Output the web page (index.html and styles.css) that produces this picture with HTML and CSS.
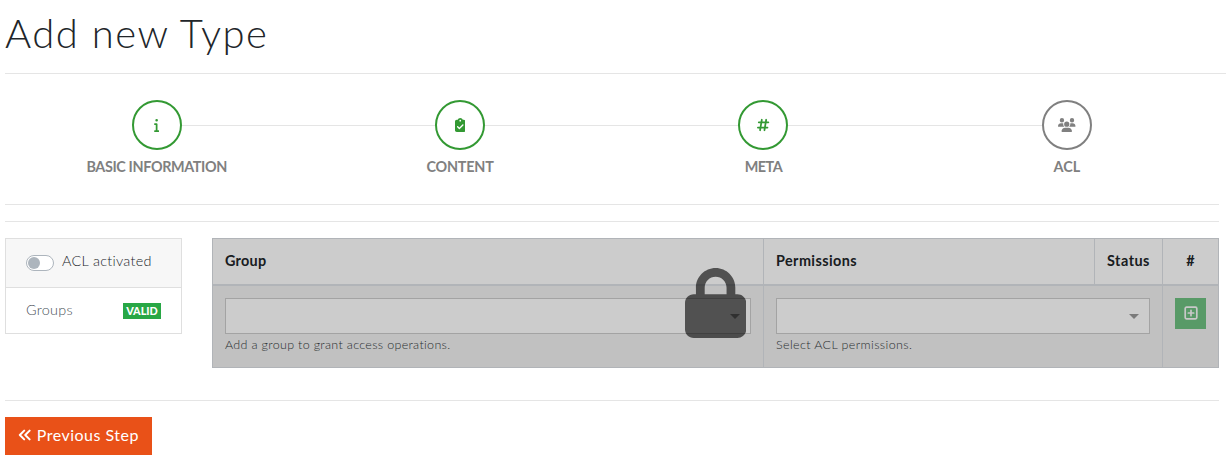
FILE: index.html
```html
<!DOCTYPE html>
<html lang="en">
<head>
<meta charset="utf-8">
<title>Add new Type</title>
<link rel="stylesheet" href="styles.css">
</head>
<body>
<h1 class="title"><span>Add new Type</span></h1>
<main class="content">
  <ol class="steps">
    <li class="step done">
      <span class="circle"><svg width="5.25" height="14" viewBox="0 0 192 512"><path d="M48 80a48 48 0 1 1 96 0A48 48 0 1 1 48 80zM0 224c0-17.7 14.3-32 32-32H96c17.7 0 32 14.3 32 32V448h32c17.7 0 32 14.3 32 32s-14.3 32-32 32H32c-17.7 0-32-14.3-32-32s14.3-32 32-32H64V256H32c-17.7 0-32-14.3-32-32z"/></svg></span>
      <span class="label l-basic">BASIC INFORMATION</span>
    </li>
    <li class="step done">
      <span class="circle"><svg width="10.5" height="14" viewBox="0 0 384 512"><path fill-rule="evenodd" d="M192 0c-41.800 0-77.400 26.700-90.500 64H64C28.700 64 0 92.700 0 128v320c0 35.300 28.700 64 64 64h256c35.300 0 64-28.700 64-64V128c0-35.300-28.700-64-64-64h-37.500C269.400 26.700 233.800 0 192 0zm0 64a32 32 0 1 1 0 64 32 32 0 1 1 0-64zM305 273L177 401c-9.400 9.400-24.600 9.400-33.900 0L79 337c-9.400-9.400-9.400-24.600 0-33.900s24.600-9.400 33.900 0l47 47L271 239c9.400-9.400 24.600-9.400 33.900 0s9.400 24.600 0 33.900z"/></svg></span>
      <span class="label l-content">CONTENT</span>
    </li>
    <li class="step done">
      <span class="circle"><svg width="12.25" height="14" viewBox="0 0 448 512"><path d="M181.300 32.400c17.400 2.900 29.200 19.400 26.300 36.800L197.800 128h95.100l11.500-69.300c2.900-17.400 19.400-29.200 36.800-26.300s29.200 19.400 26.300 36.800L357.800 128H416c17.700 0 32 14.300 32 32s-14.300 32-32 32H347.100L325.800 320H384c17.700 0 32 14.300 32 32s-14.300 32-32 32H315.100l-11.500 69.300c-2.900 17.400-19.400 29.200-36.800 26.300s-29.200-19.400-26.300-36.800l9.800-58.700H155.100l-11.500 69.300c-2.900 17.400-19.400 29.200-36.800 26.300s-29.200-19.400-26.300-36.800L90.200 384H32c-17.700 0-32-14.300-32-32s14.300-32 32-32h68.900l21.300-128H64c-17.700 0-32-14.300-32-32s14.300-32 32-32h68.900l11.500-69.300c2.900-17.400 19.400-29.200 36.800-26.300zM187.100 192L165.800 320h95.100l21.300-128H187.100z"/></svg></span>
      <span class="label l-meta">META</span>
    </li>
    <li class="step">
      <span class="circle"><svg width="17.5" height="14" viewBox="0 0 640 512"><path d="M144 0a80 80 0 1 1 0 160A80 80 0 1 1 144 0zM512 0a80 80 0 1 1 0 160A80 80 0 1 1 512 0zM0 298.700C0 239.800 47.800 192 106.700 192h42.700c15.900 0 31 3.500 44.600 9.700c-1.300 7.200-1.900 14.700-1.900 22.300c0 38.200 16.800 72.500 43.300 96H21.300C9.600 320 0 310.400 0 298.700zM404.600 320c26.600-23.500 43.300-57.800 43.300-96c0-7.600-.7-15-1.900-22.300c13.600-6.300 28.700-9.700 44.600-9.700h42.700C592.200 192 640 239.800 640 298.700c0 11.800-9.600 21.300-21.300 21.300H404.600zM224 224a96 96 0 1 1 192 0 96 96 0 1 1-192 0zM128 485.300C128 411.700 187.700 352 261.300 352H378.700C452.300 352 512 411.700 512 485.300c0 14.700-11.900 26.700-26.700 26.700H154.700c-14.700 0-26.700-11.900-26.700-26.700z"/></svg></span>
      <span class="label l-acl">ACL</span>
    </li>
  </ol>
  <div class="divider"></div>
  <div class="acl">
    <aside class="card">
      <div class="card-head"><span class="switch"></span><span class="switch-label">ACL activated</span></div>
      <div class="card-row"><span class="groups">Groups</span><span class="badge"><span>VALID</span></span></div>
    </aside>
    <section class="grid">
      <div class="cell head"><span class="h-group">Group</span></div>
      <div class="cell head"><span class="h-perm">Permissions</span></div>
      <div class="cell head"><span class="h-status">Status</span></div>
      <div class="cell head center"><span>#</span></div>
      <div class="cell body">
        <div class="select"><span class="caret"></span></div>
        <span class="help help-group">Add a group to grant access operations.</span>
      </div>
      <div class="cell body wide">
        <div class="select"><span class="caret"></span></div>
        <span class="help help-perm">Select ACL permissions.</span>
      </div>
      <div class="cell body">
        <button class="add" disabled aria-label="Add"><svg width="14" height="14" viewBox="0 0 14 14" fill="none" stroke="#fff"><rect x="1.200" y="1.200" width="11.600" height="11.600" rx="1.300" stroke-width="1.700"/><path d="M7 4.300v5.400M4.300 7h5.400" stroke-width="1.700" stroke-linecap="round"/></svg></button>
      </div>
      <div class="overlay"><svg class="lock" width="61.25" height="70" viewBox="0 0 448 512"><path d="M144 144v48H304V144c0-44.200-35.800-80-80-80s-80 35.800-80 80zM80 192V144C80 64.500 144.500 0 224 0s144 64.500 144 144v48h16c35.300 0 64 28.700 64 64V448c0 35.300-28.700 64-64 64H64c-35.300 0-64-28.700-64-64V256c0-35.300 28.700-64 64-64H80z"/></svg></div>
    </section>
  </div>
  <footer class="footer">
    <button class="prev"><svg width="14" height="14" viewBox="0 0 14 14" fill="none" stroke="#fff" stroke-width="2.200" stroke-linecap="round" stroke-linejoin="round"><path d="M6.800 2.200L2 7l4.800 4.800M12.800 2.200L8 7l4.800 4.800"/></svg><span>Previous Step</span></button>
  </footer>
</main>
</body>
</html>
```
FILE: styles.css
```css
* { box-sizing: border-box; }
body {
  margin: 0;
  padding: 9px 0 0 5px;
  height: 461px;
  overflow: hidden;
  background: #fff;
  color: #212529;
  font: 300 14.4px/22px Lato, "Open Sans", sans-serif;
  font-variant-ligatures: none;
}
span { white-space: nowrap; }
.title {
  margin: 0;
  height: 65px;
  border-bottom: 1px solid #e5e5e5;
  font-size: 40px;
  line-height: 48px;
  font-weight: 300;
  letter-spacing: 1.5px;
}
.content { width: 1214px; }
.steps {
  display: flex;
  margin: 0;
  padding: 26px .5px 0 0;
  height: 131px;
  list-style: none;
  border-bottom: 1px solid #e5e5e5;
}
.step {
  flex: 1;
  display: grid;
  grid-template-columns: 1fr 50px 1fr;
  grid-template-rows: 50px 22px;
  row-gap: 6px;
  color: #808080;
}
.step::before, .step::after {
  content: "";
  grid-row: 1;
  height: 1px;
  margin-top: 25px;
  background: #e5e5e5;
}
.step::before { grid-column: 1; }
.step::after { grid-column: 3; }
.step:first-child::before, .step:last-child::after { background: none; }
.circle {
  grid-row: 1;
  grid-column: 2;
  display: flex;
  align-items: center;
  justify-content: center;
  border: 2px solid currentColor;
  border-radius: 50%;
}
.circle svg { fill: currentColor; }
.done .circle { color: #339933; }
.label {
  grid-row: 2;
  grid-column: 1 / 4;
  justify-self: center;
  font-weight: 700;
}
.l-basic { letter-spacing: -.38px; }
.l-content { letter-spacing: -.2px; }
.l-meta { letter-spacing: -.5px; }
.divider { height: 17px; border-bottom: 1px solid #e5e5e5; }
.acl {
  display: grid;
  grid-template-columns: 177px 1007px;
  justify-content: space-between;
  align-items: start;
  padding-top: 16px;
  height: 178px;
}
.card { border: 1px solid #dfdfdf; }
.card-head {
  display: flex;
  align-items: center;
  gap: 8px;
  height: 49px;
  padding: 0 20px 5px;
  background: #f7f7f7;
  border-bottom: 1px solid #dfdfdf;
}
.switch {
  width: 28px;
  height: 16px;
  margin-top: 4px;
  padding: 1px;
  border: 1px solid #adb5bd;
  border-radius: 8px;
  background: #fff;
}
.switch::before {
  content: "";
  display: block;
  width: 12px;
  height: 12px;
  border-radius: 50%;
  background: #adb5bd;
}
.switch-label { letter-spacing: .3px; }
.card-row {
  display: flex;
  justify-content: space-between;
  align-items: center;
  height: 45px;
  padding: 0 20px;
}
.groups { padding-bottom: 2px; color: #495057; letter-spacing: .3px; }
.badge {
  width: 38px;
  height: 16px;
  margin-top: 1px;
  background: #28a745;
  color: #fff;
  text-align: center;
  font-size: 10.800px;
  line-height: 16px;
  font-weight: 900;
}
.grid {
  position: relative;
  display: grid;
  grid-template-columns: 551px 331px 68px 57px;
  grid-template-rows: 48px 82px;
}
.cell { border: 0 solid #dee2e6; border-left-width: 1px; }
.cell:nth-child(4), .cell:nth-child(7) { border-right-width: 1px; }
.head {
  border-top-width: 1px;
  border-bottom-width: 2px;
  padding: 11px 12px;
  font-weight: 700;
}
.h-group { letter-spacing: .25px; }
.h-perm { letter-spacing: .42px; }
.h-status { letter-spacing: .5px; }
.center { text-align: center; padding: 11px 0; }
.body { padding: 12px; background: #f2f2f2; border-bottom-width: 1px; }
.wide { grid-column: 2 / 4; }
.select {
  display: flex;
  justify-content: flex-end;
  align-items: center;
  height: 36px;
  padding-right: 10px;
  border: 1px solid #ccc;
  background: #fff;
}
.caret {
  border: 5px solid transparent;
  border-top-color: #999;
  border-bottom: 0;
  margin-top: 1px;
}
.help {
  display: block;
  width: max-content;
  font-size: 12.500px;
  line-height: 21px;
  color: #343a40;
  letter-spacing: .32px;
}
.help-perm { letter-spacing: .38px; }
.add {
  display: grid;
  place-items: center;
  width: 31px;
  height: 31px;
  padding: 0 0 2px;
  border: 0;
  background: #28a745;
  opacity: .65;
}
.overlay {
  position: absolute;
  inset: 0;
  display: grid;
  place-items: center;
  background: rgba(0, 0, 0, .2);
}
.lock { opacity: .6; }
.footer { padding-top: 16px; border-top: 1px solid #e5e5e5; }
.prev {
  display: flex;
  align-items: center;
  gap: 6px;
  width: 147px;
  height: 38px;
  padding: 0 13px 2px;
  border: 0;
  background: #e95118;
  color: #fff;
  font: 400 16px/24px Lato, sans-serif;
  letter-spacing: .5px;
}
```
